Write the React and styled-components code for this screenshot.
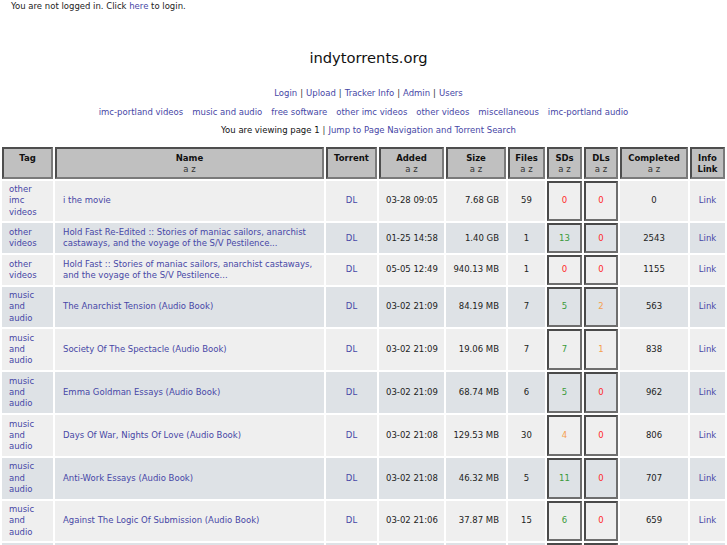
import React from "react";
import styled, { createGlobalStyle } from "styled-components";

const Global = createGlobalStyle`
  html, body { margin: 0; padding: 0; background: #ffffff; }
  body {
    font-family: "DejaVu Sans", Verdana, sans-serif;
    font-size: 8.5px;
    line-height: 11.2px;
    color: #222222;
  }
`;

const Page = styled.div`
  display: flex;
  flex-direction: column;
  width: 727px;
`;

const Link = styled.a`
  color: #4747a6;
  text-decoration: none;
  cursor: pointer;
`;

const LoginNote = styled.div`
  padding: 1px 11px 0;
  height: 11px;
  line-height: 11px;
`;

const SiteTitle = styled.h1`
  margin: 37px 0 0;
  padding-left: 10px;
  font-size: 14.7px;
  line-height: 17px;
  font-weight: normal;
  color: #111111;
  text-align: center;
`;

const NavLine = styled.div`
  margin-top: 21.5px;
  padding-left: 10px;
  text-align: center;
  line-height: 11px;
`;

const Sep = styled.span`
  color: #333333;
  margin: 0 3px;
`;

const CategoryBar = styled.div`
  margin-top: 8.5px;
  display: flex;
  justify-content: center;
  gap: 9px;
  line-height: 11px;
`;

const PageInfo = styled.div`
  margin-top: 7px;
  padding-left: 10px;
  text-align: center;
  line-height: 11px;
  color: #111111;
`;

const Table = styled.table`
  margin-top: 8.6px;
  width: 727px;
  table-layout: fixed;
  border-collapse: separate;
  border-spacing: 2px;
`;

const HeadCell = styled.th`
  background: #c0c0c0;
  border: 2px solid;
  border-color: #4e4e4e #7a7a7a #7a7a7a #4e4e4e;
  padding: 4px 1px 1.6px;
  font-weight: bold;
  color: #111111;
  text-align: center;
  vertical-align: top;
  line-height: 11.2px;
  white-space: nowrap;
`;

const SortLinks = styled.div`
  font-weight: normal;
  color: #333333;
`;

const Row = styled.tr`
  background: ${(p) => (p.$alt ? "#dee2e6" : "#efefef")};
`;

const Cell = styled.td`
  padding: 3.6px 7px;
  text-align: ${(p) => p.$align || "center"};
  vertical-align: middle;
  color: #222222;
  white-space: ${(p) => (p.$nowrap ? "nowrap" : "normal")};
`;

const NameCell = styled(Cell)`
  padding-left: 8px;
  padding-right: 2px;
  white-space: nowrap;
`;

const PeerCell = styled.td`
  padding: 3.6px 2px;
  text-align: center;
  vertical-align: middle;
  border: 2px solid;
  border-color: #4a4a4a #6e6e6e #6e6e6e #4a4a4a;
  color: ${(p) => p.$color};
`;

const peerColor = (n, kind) => {
  if (n === 0) return "#ff2a2a";
  if (kind === "sd") return n >= 5 ? "#3a9a3a" : "#f5a04e";
  return "#f5a04e";
};

const columns = [
  { key: "tag", label: "Tag", width: 51 },
  { key: "name", label: "Name", width: 269, sort: true },
  { key: "torrent", label: "Torrent", width: 51 },
  { key: "added", label: "Added", width: 65, sort: true },
  { key: "size", label: "Size", width: 60, sort: true },
  { key: "files", label: "Files", width: 37, sort: true },
  { key: "sds", label: "SDs", width: 35, sort: true },
  { key: "dls", label: "DLs", width: 34, sort: true },
  { key: "completed", label: "Completed", width: 68, sort: true },
  { key: "info", label: ["Info", "Link"], width: 35 },
];

const rows = [
  { tag: "other imc videos", name: ["i the movie"], added: "03-28 09:05", size: "7.68 GB", files: 59, sd: 0, dl: 0, done: 0 },
  { tag: "other videos", name: ["Hold Fast Re-Edited :: Stories of maniac sailors, anarchist", "castaways, and the voyage of the S/V Pestilence..."], added: "01-25 14:58", size: "1.40 GB", files: 1, sd: 13, dl: 0, done: 2543 },
  { tag: "other videos", name: ["Hold Fast :: Stories of maniac sailors, anarchist castaways,", "and the voyage of the S/V Pestilence..."], added: "05-05 12:49", size: "940.13 MB", files: 1, sd: 0, dl: 0, done: 1155 },
  { tag: "music and audio", name: ["The Anarchist Tension (Audio Book)"], added: "03-02 21:09", size: "84.19 MB", files: 7, sd: 5, dl: 2, done: 563 },
  { tag: "music and audio", name: ["Society Of The Spectacle (Audio Book)"], added: "03-02 21:09", size: "19.06 MB", files: 7, sd: 7, dl: 1, done: 838 },
  { tag: "music and audio", name: ["Emma Goldman Essays (Audio Book)"], added: "03-02 21:09", size: "68.74 MB", files: 6, sd: 5, dl: 0, done: 962 },
  { tag: "music and audio", name: ["Days Of War, Nights Of Love (Audio Book)"], added: "03-02 21:08", size: "129.53 MB", files: 30, sd: 4, dl: 0, done: 806 },
  { tag: "music and audio", name: ["Anti-Work Essays (Audio Book)"], added: "03-02 21:08", size: "46.32 MB", files: 5, sd: 11, dl: 0, done: 707 },
  { tag: "music and audio", name: ["Against The Logic Of Submission (Audio Book)"], added: "03-02 21:06", size: "37.87 MB", files: 15, sd: 6, dl: 0, done: 659 },
  { tag: "music and audio", name: ["Post-Scarcity Anarchism (Audio Book)"], added: "03-02 21:05", size: "52.10 MB", files: 9, sd: 5, dl: 0, done: 640 },
];

const categories = [
  "imc-portland videos",
  "music and audio",
  "free software",
  "other imc videos",
  "other videos",
  "miscellaneous",
  "imc-portland audio",
];

const navItems = ["Login", "Upload", "Tracker Info", "Admin", "Users"];

const withBreaks = (parts) =>
  parts.map((p, i) => (
    <React.Fragment key={i}>
      {i > 0 && <br />}
      {p}
    </React.Fragment>
  ));

export default function App() {
  return (
    <>
      <Global />
      <Page>
        <LoginNote>
          You are not logged in. Click <Link>here</Link> to login.
        </LoginNote>
        <SiteTitle>indytorrents.org</SiteTitle>
        <NavLine>
          {navItems.map((n, i) => (
            <React.Fragment key={n}>
              {i > 0 && <Sep>|</Sep>}
              <Link>{n}</Link>
            </React.Fragment>
          ))}
        </NavLine>
        <CategoryBar>
          {categories.map((c) => (
            <Link key={c}>{c}</Link>
          ))}
        </CategoryBar>
        <PageInfo>
          You are viewing page 1<Sep>|</Sep>
          <Link>Jump to Page Navigation and Torrent Search</Link>
        </PageInfo>
        <Table>
          <colgroup>
            {columns.map((c) => (
              <col key={c.key} style={{ width: c.width }} />
            ))}
          </colgroup>
          <thead>
            <tr>
              {columns.map((c) => (
                <HeadCell key={c.key}>
                  {Array.isArray(c.label) ? withBreaks(c.label) : c.label}
                  {c.sort && <SortLinks>a z</SortLinks>}
                </HeadCell>
              ))}
            </tr>
          </thead>
          <tbody>
            {rows.map((r, i) => (
              <Row key={i} $alt={i % 2 === 1}>
                <Cell $align="left">
                  <Link>{withBreaks(r.tag.split(" "))}</Link>
                </Cell>
                <NameCell $align="left">
                  <Link>{withBreaks(r.name)}</Link>
                </NameCell>
                <Cell>
                  <Link>DL</Link>
                </Cell>
                <Cell $nowrap>{r.added}</Cell>
                <Cell $align="right" $nowrap>
                  {r.size}
                </Cell>
                <Cell>{r.files}</Cell>
                <PeerCell $color={peerColor(r.sd, "sd")}>{r.sd}</PeerCell>
                <PeerCell $color={peerColor(r.dl, "dl")}>{r.dl}</PeerCell>
                <Cell>{r.done}</Cell>
                <Cell>
                  <Link>Link</Link>
                </Cell>
              </Row>
            ))}
          </tbody>
        </Table>
      </Page>
    </>
  );
}
